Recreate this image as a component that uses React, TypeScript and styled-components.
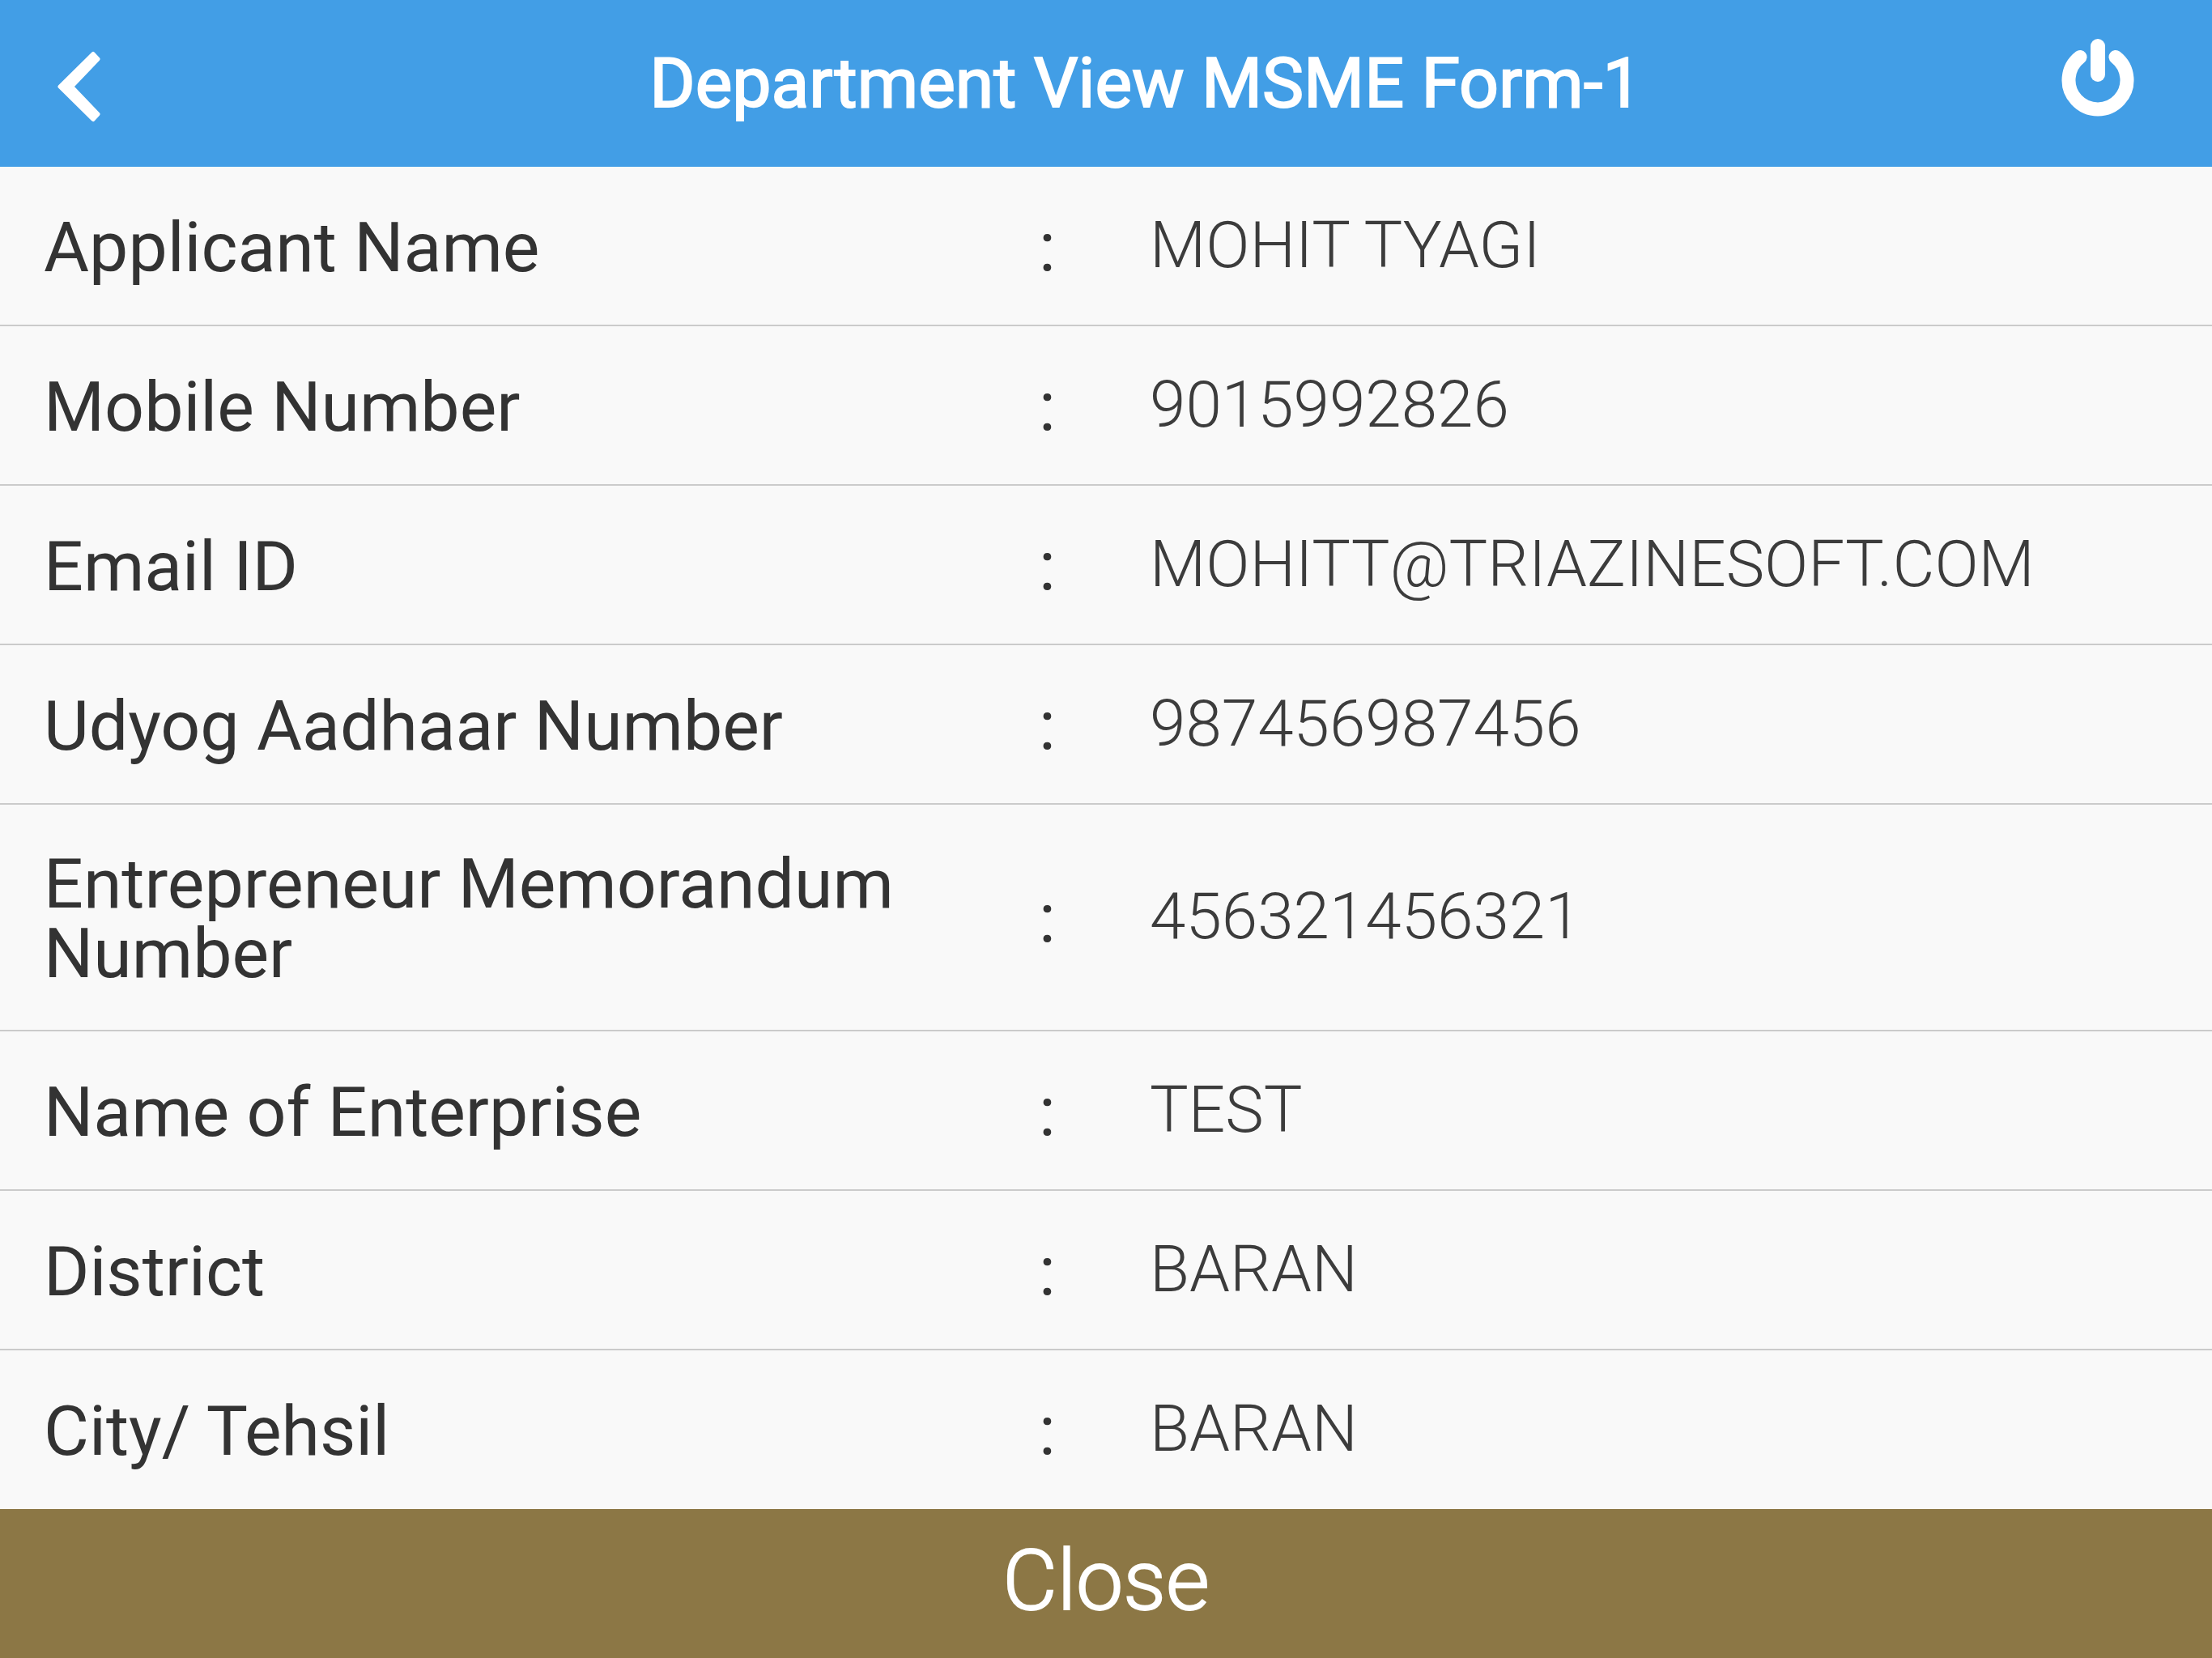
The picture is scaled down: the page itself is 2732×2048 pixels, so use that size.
import React from "react";
import styled, { createGlobalStyle } from "styled-components";

const GlobalStyle = createGlobalStyle`
  *, *::before, *::after {
    box-sizing: border-box;
  }
  body {
    margin: 0;
    background: #f9f9f9;
    font-family: Roboto, "Noto Sans", sans-serif;
  }
`;

const Page = styled.div`
  display: flex;
  flex-direction: column;
  min-height: 100vh;
`;

const Header = styled.header`
  display: grid;
  grid-template-columns: 284px minmax(0, 1fr) 186px;
  align-items: center;
  min-height: 206px;
  background: #429ee6;
  color: #fff;
`;

const Title = styled.h1`
  margin: 0;
  font-size: 86px;
  line-height: 104px;
  font-weight: 400;
  -webkit-text-stroke: 2px currentColor;
  text-align: center;
`;

const IconButton = styled.button<{ $side: "left" | "right" }>`
  display: flex;
  align-items: center;
  align-self: stretch;
  justify-content: flex-start;
  padding: ${(p) => (p.$side === "left" ? "8px 0 0 71px" : "0 0 14px 0")};
  border: 0;
  background: none;
  color: inherit;
  cursor: pointer;
`;

const Details = styled.dl`
  flex: 1;
  margin: 0;
`;

const Row = styled.div`
  display: grid;
  grid-template-columns: minmax(0, 1fr) 83px 50%;
  align-items: center;
  min-height: 197px;
  padding: 55px 54px 51px;
  border-bottom: 2px solid #cbcbcb;
  color: #333;

  &:last-child {
    min-height: 195px;
    border-bottom: 0;
  }
`;

const Label = styled.dt`
  display: contents;
  font-size: 86px;
  line-height: 86px;
  font-weight: 400;
`;

const Value = styled.dd`
  margin: 0;
  padding: 0 0 6px 54px;
  color: #3c3c3c;
  font-size: 80px;
  line-height: 80px;
  font-weight: 300;
`;

const Footer = styled.footer`
  position: sticky;
  bottom: 0;
  display: flex;
`;

const CloseButton = styled.button`
  flex: 1;
  min-height: 184px;
  padding: 0 0 6px;
  border: 0;
  background: #8c7745;
  color: #fff;
  font-family: inherit;
  font-size: 104px;
  line-height: 124px;
  font-weight: 300;
  -webkit-text-stroke: 2px currentColor;
  cursor: pointer;
`;

const BackIcon = () => (
  <svg width="53" height="88" viewBox="0 0 53 88" aria-hidden="true">
    <path
      d="M3 44 44 3.5 50 10 17.5 44 50 78 44 84.5Z"
      fill="currentColor"
      stroke="currentColor"
      strokeWidth="5"
      strokeLinejoin="round"
    />
  </svg>
);

const PowerIcon = () => (
  <svg width="90" height="98" viewBox="0 0 90 98" aria-hidden="true">
    <g fill="none" stroke="currentColor" strokeWidth="17" strokeLinecap="round">
      <path d="M23 23.5A36 36 0 1 0 67 23.5" />
      <path d="M45 10V45" strokeWidth="18" />
    </g>
  </svg>
);

const fields = [
  { label: "Applicant Name", value: "MOHIT TYAGI" },
  { label: "Mobile Number", value: "9015992826" },
  { label: "Email ID", value: "MOHITT@TRIAZINESOFT.COM" },
  { label: "Udyog Aadhaar Number", value: "987456987456" },
  { label: "Entrepreneur Memorandum Number", value: "456321456321" },
  { label: "Name of Enterprise", value: "TEST" },
  { label: "District", value: "BARAN" },
  { label: "City/ Tehsil", value: "BARAN" },
];

export default function App() {
  return (
    <Page>
      <GlobalStyle />
      <Header>
        <IconButton type="button" $side="left" aria-label="Back">
          <BackIcon />
        </IconButton>
        <Title>Department View MSME Form-1</Title>
        <IconButton type="button" $side="right" aria-label="Log out">
          <PowerIcon />
        </IconButton>
      </Header>
      <Details>
        {fields.map((field) => (
          <Row key={field.label}>
            <Label>
              <span>{field.label}</span>
              <span>:</span>
            </Label>
            <Value>{field.value}</Value>
          </Row>
        ))}
      </Details>
      <Footer>
        <CloseButton type="button">Close</CloseButton>
      </Footer>
    </Page>
  );
}
